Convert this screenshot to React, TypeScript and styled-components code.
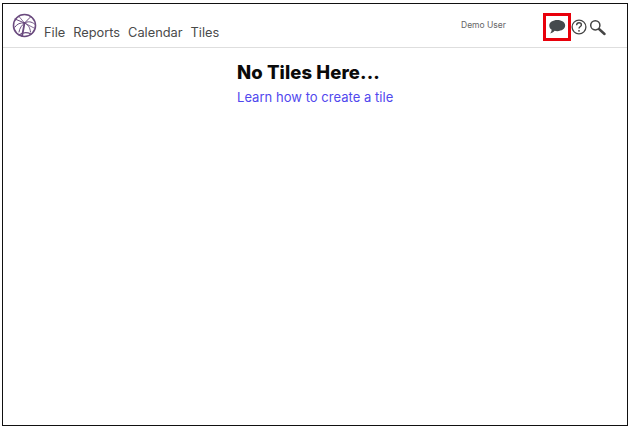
import { createGlobalStyle } from "styled-components";
import styled from "styled-components";

const GlobalStyle = createGlobalStyle`
  html, body {
    margin: 0;
    padding: 0;
    background: #fff;
  }
  body {
    font-family: Inter, "Open Sans", "Liberation Sans", sans-serif;
  }
`;

const Frame = styled.div`
  box-sizing: border-box;
  width: 626px;
  height: 423px;
  margin: 3px 0 0 2px;
  border: 1px solid #111;
  background: #fff;
`;

const Header = styled.header`
  box-sizing: border-box;
  height: 44px;
  display: flex;
  align-items: flex-start;
  padding: 8px 21px 0 9px;
  border-bottom: 1px solid #dedede;
`;

const Logo = styled.svg`
  width: 25px;
  height: 25px;
  flex: none;
  margin-top: 1px;
`;

const Nav = styled.nav`
  display: flex;
  gap: 8px;
  margin: 12px 0 0 7px;
`;

const NavItem = styled.a`
  font-size: 12.8px;
  line-height: 17px;
  color: #4a4a4a;
`;

const UserName = styled.span`
  margin: 5px 37px 0 auto;
  font-size: 8.5px;
  line-height: 16px;
  color: #666;
`;

const ChatButton = styled.button`
  box-sizing: border-box;
  width: 28px;
  height: 28px;
  margin-top: 1px;
  padding: 0;
  display: flex;
  align-items: center;
  justify-content: center;
  border: 3px solid #e8000b;
  background: transparent;
`;

const IconSlot = styled.svg<{ $left: number }>`
  flex: none;
  margin: 7px 0 0 ${(p) => p.$left}px;
`;

const Content = styled.main`
  padding: 13px 0 0 234px;
`;

const Title = styled.h1`
  margin: 0;
  font-size: 18.5px;
  line-height: 22px;
  font-weight: 800;
  letter-spacing: 0.1px;
  color: #0a0a0a;
`;

const TileLink = styled.a`
  display: block;
  margin-top: 6px;
  font-size: 13px;
  line-height: 17px;
  color: #5148ee;
  letter-spacing: 0.03px;
`;

export default function App() {
  return (
    <>
      <GlobalStyle />
      <Frame>
        <Header>
          <Logo viewBox="0 0 25 25" fill="none" stroke="#6a4a7e" strokeWidth="1" strokeLinecap="round">
            <circle cx="12.5" cy="12.5" r="11" strokeWidth="1.6" />
            <path d="M12.5 10 C11.8 14 11 19 10 23" strokeWidth="1.8" />
            <path d="M12.5 10 L3 6 M12.5 10 C8 9.5 5 11 3 14 M12.5 10 C10 12 7.5 15 7 19" />
            <path d="M12.5 10 L19 3.5 M12.5 10 C16 8 19.5 8.5 22.5 11 M12.5 10 C16 11.5 18 14 18.5 19" />
            <path d="M12.5 10 L7 3.5 M12.5 10 L22 15" strokeWidth="0.8" />
            <path d="M7 22 C11 19 15 19 19 21" strokeWidth="1.1" />
          </Logo>
          <Nav>
            <NavItem>File</NavItem>
            <NavItem>Reports</NavItem>
            <NavItem>Calendar</NavItem>
            <NavItem>Tiles</NavItem>
          </Nav>
          <UserName>Demo User</UserName>
          <ChatButton aria-label="Chat">
            <svg width="18" height="16" viewBox="0 0 17 15">
              <path
                d="M8.8 1C13 1 16.2 3.1 16.2 6.2S13 11.4 8.8 11.4C7.9 11.4 7 11.3 6.2 11.1 5.2 12.3 3.6 13.3 2 13.6 2.9 12.6 3.4 11.5 3.5 10.2 2 9.3 1.2 7.9 1.2 6.2 1.2 3.1 4.6 1 8.8 1Z"
                fill="#454a4d"
              />
            </svg>
          </ChatButton>
          <IconSlot $left={0} width="16" height="16" viewBox="0 0 16 16" fill="none">
            <circle cx="8" cy="8" r="6.9" stroke="#444" strokeWidth="1.3" />
            <path d="M5.6 6.2C5.7 4.6 6.7 3.8 8 3.8 9.4 3.8 10.4 4.7 10.4 5.9 10.4 7.4 8 7.6 8 9.6" stroke="#444" strokeWidth="1.4" />
            <circle cx="8" cy="11.8" r="0.9" fill="#444" />
          </IconSlot>
          <IconSlot $left={2} width="17" height="17" viewBox="0 0 17 17" fill="none">
            <circle cx="6.3" cy="6.3" r="4.6" stroke="#444" strokeWidth="1.5" />
            <path d="M10 10 L15.5 15" stroke="#444" strokeWidth="2.4" strokeLinecap="round" />
          </IconSlot>
        </Header>
        <Content>
          <Title>No Tiles Here...</Title>
          <TileLink>Learn how to create a tile</TileLink>
        </Content>
      </Frame>
    </>
  );
}
